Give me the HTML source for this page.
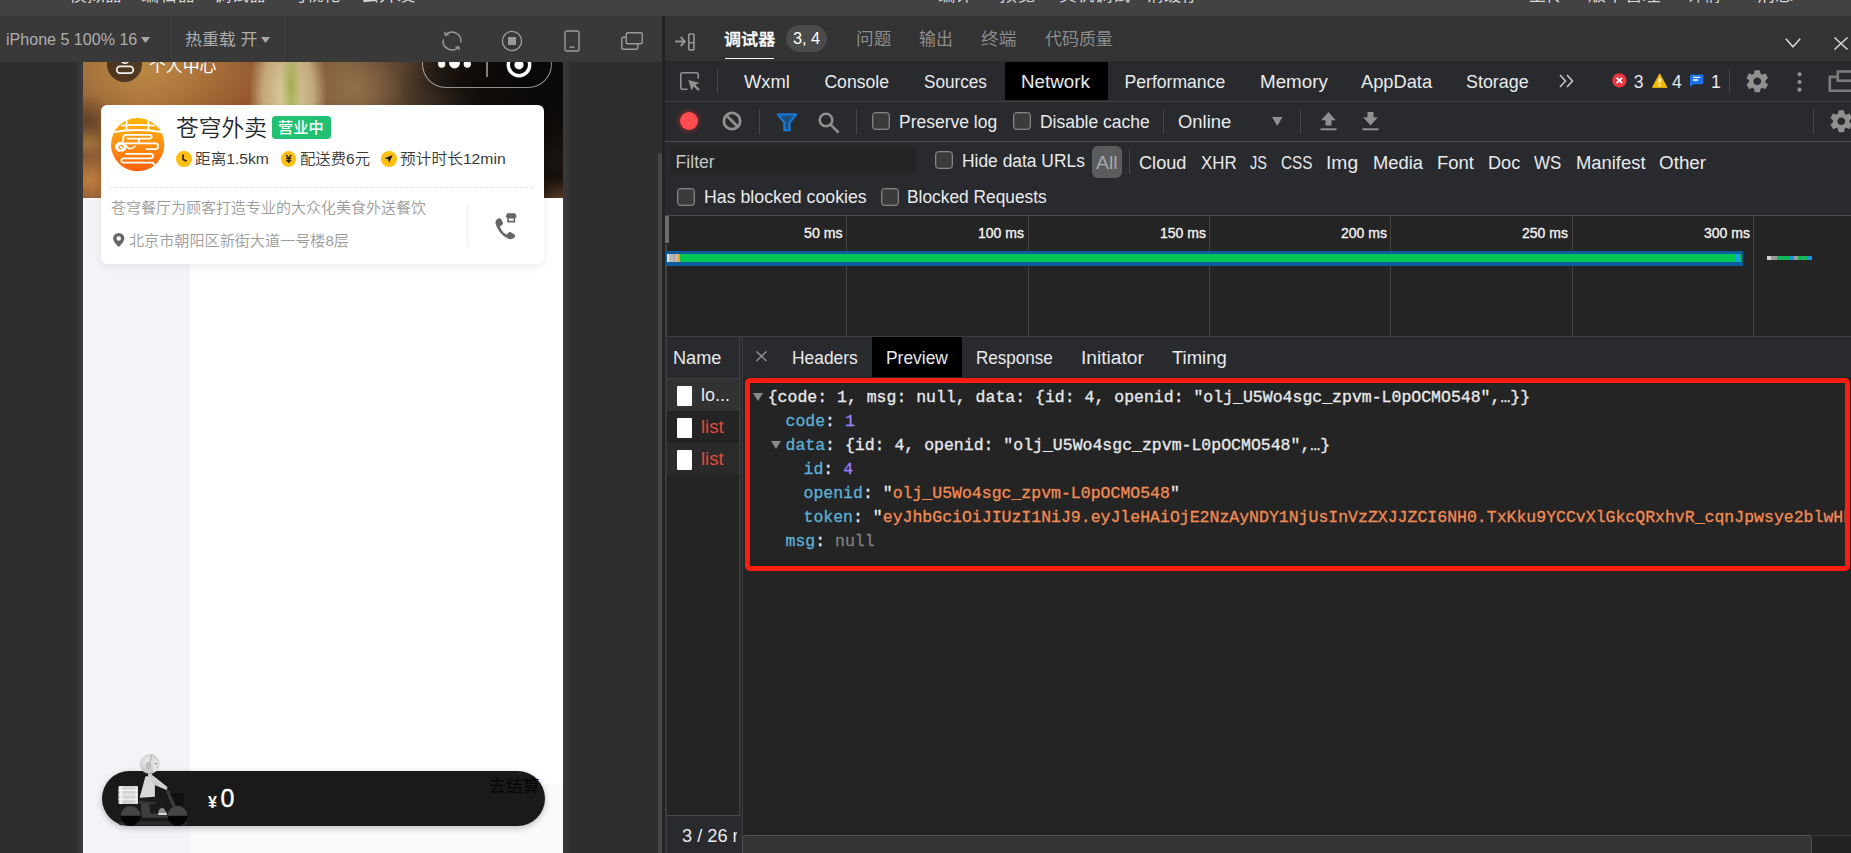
<!DOCTYPE html>
<html lang="zh-CN"><head><meta charset="utf-8"><title>微信开发者工具 - 调试器 Network Preview</title>
<style>
html,body{margin:0;padding:0;overflow:hidden}
html{width:1851px;height:853px;background:#2e2e2e}
#root{position:absolute;left:0;top:0;width:1851px;height:853px;overflow:hidden}
body{width:1851px;height:853px;overflow:hidden;position:relative;background:#2e2e2e;font-family:"Liberation Sans","Noto Sans CJK SC",sans-serif;}
.a{position:absolute}
.t{position:absolute;white-space:pre;transform-origin:0 50%;font-family:"Liberation Sans","Noto Sans CJK SC",sans-serif}
.clip{position:absolute;overflow:hidden}
svg{position:absolute;overflow:visible}
.cb{position:absolute;width:16px;height:16px;border:1px solid #858585;border-radius:3.500px;background:#3b3b3b;box-shadow:inset 0 0 0 .5px #6a6a6a}
.vsep{position:absolute;width:1px;background:#4a4a4a}

</style></head>
<body>
<div id="root">
<div class="clip" style="left:0;top:0;width:1851px;height:16px;background:#424242">
<span class="t" style='left:69.3px;top:-14.8px;font-size:16.5px;line-height:21px;color:#d6d6d6;transform:scaleX(1.0768);'>模拟器</span>
<span class="t" style='left:141.3px;top:-14.8px;font-size:16.5px;line-height:21px;color:#d6d6d6;transform:scaleX(1.0970);'>编辑器</span>
<span class="t" style='left:214.3px;top:-14.8px;font-size:16.5px;line-height:21px;color:#d6d6d6;transform:scaleX(1.0566);'>调试器</span>
<span class="t" style='left:290.4px;top:-14.8px;font-size:16.5px;line-height:21px;color:#d6d6d6;transform:scaleX(1.0162);'>可视化</span>
<span class="t" style='left:361.4px;top:-14.8px;font-size:16.5px;line-height:21px;color:#d6d6d6;transform:scaleX(1.0970);'>云开发</span>
<span class="t" style='left:938.4px;top:-14.8px;font-size:16.5px;line-height:21px;color:#d6d6d6;transform:scaleX(1.0545);'>编译</span>
<span class="t" style='left:999.4px;top:-14.8px;font-size:16.5px;line-height:21px;color:#d6d6d6;transform:scaleX(1.1000);'>预览</span>
<span class="t" style='left:1059.3px;top:-14.8px;font-size:16.5px;line-height:21px;color:#d6d6d6;transform:scaleX(1.0803);'>真机调试</span>
<span class="t" style='left:1146.8px;top:-14.8px;font-size:16.5px;line-height:21px;color:#d6d6d6;transform:scaleX(1.0364);'>清缓存</span>
<span class="t" style='left:1529.3px;top:-14.8px;font-size:16.5px;line-height:21px;color:#d6d6d6;transform:scaleX(1.0242);'>上传</span>
<span class="t" style='left:1588.3px;top:-14.8px;font-size:16.5px;line-height:21px;color:#d6d6d6;transform:scaleX(1.0955);'>版本管理</span>
<span class="t" style='left:1686.8px;top:-14.8px;font-size:16.5px;line-height:21px;color:#d6d6d6;transform:scaleX(1.0242);'>详情</span>
<span class="t" style='left:1756.8px;top:-14.8px;font-size:16.5px;line-height:21px;color:#d6d6d6;transform:scaleX(1.1000);'>消息</span>
</div>
<div class="a" style="left:0;top:16px;width:662px;height:46px;background:#393939"></div>
<div class="a" style="left:168px;top:16px;width:1px;height:46px;background:#343434"></div>
<div class="a" style="left:287px;top:16px;width:1px;height:46px;background:#343434"></div>
<span class="t" style='left:5.8px;top:28.7px;font-size:16.2px;line-height:21px;color:#adadad;transform:scaleX(0.9923);'>iPhone 5 100% 16</span>
<svg style="left:141px;top:37px" width="9" height="6"><path d="M0 0h9L4.5 6z" fill="#a8a8a8"/></svg>
<span class="t" style='left:185.3px;top:28.7px;font-size:16.2px;line-height:21px;color:#adadad;transform:scaleX(1.0440);'>热重载 开</span>
<svg style="left:261px;top:37px" width="9" height="6"><path d="M0 0h9L4.5 6z" fill="#a8a8a8"/></svg>
<svg style="left:440px;top:29px;transform:scaleX(-1)" width="24" height="24" viewBox="0 0 24 24" fill="none" stroke="#9a9a9a" stroke-width="1.4">
<path d="M3.2 13.5A9 9 0 0 1 18.5 5.8"/><path d="M20.8 10.5A9 9 0 0 1 5.5 18.2"/>
<path d="M19.3 2.8l-.6 3.4-3.3-.6" /><path d="M4.7 21.2l.6-3.4 3.3.6"/></svg>
<svg style="left:500px;top:29px" width="24" height="24" viewBox="0 0 24 24"><circle cx="12" cy="12" r="9.6" fill="none" stroke="#9a9a9a" stroke-width="1.4"/><rect x="8" y="8" width="8" height="8" fill="#9a9a9a"/></svg>
<svg style="left:564px;top:30px" width="16" height="22" viewBox="0 0 16 22"><rect x="1" y="1" width="14" height="20" rx="2" fill="none" stroke="#9a9a9a" stroke-width="1.4"/><path d="M5.5 17.2h5" stroke="#9a9a9a" stroke-width="1.4"/></svg>
<svg style="left:621px;top:32px" width="22" height="18" viewBox="0 0 22 18" fill="none" stroke="#9a9a9a" stroke-width="1.4"><rect x="5.2" y="0.8" width="16" height="11" rx="1.5"/><path d="M5.2 5.2H2.3a1.5 1.5 0 0 0-1.5 1.5v9a1.5 1.5 0 0 0 1.5 1.5h13a1.5 1.5 0 0 0 1.5-1.5v-3.9"/></svg>
<div class="a" style="left:0;top:62px;width:658px;height:791px;background:#2e2e2e"></div>
<div class="a" style="left:563px;top:62px;width:10px;height:791px;background:linear-gradient(90deg,#3a3a3a,#2e2e2e)"></div>
<div class="a" style="left:74px;top:62px;width:9px;height:791px;background:linear-gradient(270deg,#3c3c3c,#2e2e2e)"></div>
<div class="a" style="left:658.200px;top:153px;width:3.600px;height:700px;background:#464646;border-radius:2px 2px 0 0"></div>
<div class="a" style="left:662px;top:16px;width:3px;height:837px;background:#222"></div>
<div class="clip" style="left:83px;top:62px;width:480px;height:791px;background:#fff"><div class="a" style="left:-83px;top:-62px;width:1851px;height:853px">
<div class="a" style="left:83px;top:40px;width:480px;height:158px;background:
radial-gradient(ellipse 14px 60px at 208px 48px, rgba(150,165,60,.85), rgba(150,165,60,0) 75%),
radial-gradient(ellipse 46px 95px at 205px 55px, rgba(226,216,170,.96), rgba(216,200,150,.7) 55%, rgba(215,200,150,0) 85%),
radial-gradient(ellipse 158px 115px at 474px 48px, rgba(10,9,8,1), rgba(14,11,9,.9) 50%, rgba(20,14,10,0) 100%),
radial-gradient(ellipse 50px 13px at 352px 60px, rgba(84,64,46,.85), rgba(84,64,46,0) 100%),
radial-gradient(ellipse 26px 30px at 478px 105px, rgba(78,68,60,.95), rgba(78,68,60,0) 100%),
radial-gradient(ellipse 30px 22px at 480px 158px, rgba(100,66,36,.95), rgba(100,66,36,0) 100%),
radial-gradient(ellipse 60px 50px at 470px 125px, rgba(24,18,14,1), rgba(24,18,14,0) 100%),
radial-gradient(ellipse 26px 26px at 4px 80px, rgba(98,64,38,.95), rgba(98,64,38,0) 100%),
radial-gradient(ellipse 14px 14px at 5px 100px, rgba(175,135,60,.8), rgba(175,135,60,0) 100%),
radial-gradient(ellipse 30px 22px at 6px 140px, rgba(196,128,62,.95), rgba(196,128,62,0) 100%),
radial-gradient(ellipse 120px 60px at 60px 30px, rgba(188,138,68,.9), rgba(188,138,68,0) 100%),
radial-gradient(ellipse 70px 50px at 150px 70px, rgba(150,86,44,.8), rgba(150,86,44,0) 100%),
radial-gradient(ellipse 48px 38px at 272px 48px, rgba(150,115,78,.8), rgba(150,115,78,0) 100%),
linear-gradient(90deg,#8c5c36 0%,#a56a38 12%,#995c33 30%,#8b5636 42%,#80603e 55%,#5c4430 66%,#33261c 78%,#201812 100%)"></div>
<div class="a" style="left:83px;top:198px;width:107px;height:655px;background:#f3f4f8"></div>
<div class="a" style="left:190px;top:198px;width:373px;height:655px;background:#fff"></div>
<div class="a" style="left:190px;top:784px;width:373px;height:69px;background:#fafafa"></div>
<div class="a" style="left:107px;top:46.5px;width:35px;height:35px;border-radius:50%;background:rgba(40,28,20,.72)"></div>
<svg style="left:113.5px;top:52.5px" width="22" height="22" viewBox="0 0 22 22" fill="none" stroke="#f2f2f2" stroke-width="1.750"><circle cx="11" cy="6.4" r="3.8"/><rect x="2.7" y="13.4" width="16.6" height="6.8" rx="3.4"/></svg>
<span class="t" style='left:149.0px;top:55.7px;font-size:16.5px;line-height:21px;color:#ffffff;transform:scaleX(1.0197);'>个人中心</span>
<div class="a" style="left:421.700px;top:39.500px;width:128px;height:46.500px;border-radius:24px;border:1px solid rgba(255,255,255,.55);background:rgba(0,0,0,.18)"></div>
<div class="a" style="left:486.200px;top:50px;width:1.800px;height:27px;background:rgba(255,255,255,.48)"></div>
<svg style="left:436px;top:55px" width="38" height="16" viewBox="0 0 38 16" fill="#fff"><circle cx="5.700" cy="9" r="3.650"/><circle cx="18.500" cy="8" r="5.450"/><circle cx="31.300" cy="9" r="3.650"/></svg>
<svg style="left:505.300px;top:50.600px" width="28" height="28" viewBox="0 0 28 28"><circle cx="14" cy="14" r="10.700" fill="none" stroke="#fff" stroke-width="3.400"/><circle cx="14" cy="13.800" r="4.600" fill="#fff"/></svg>
<div class="a" style="left:101px;top:105px;width:443px;height:158.5px;border-radius:6px;background:#fff;box-shadow:0 3px 8px rgba(0,0,0,.07)"></div>
<svg style="left:110.600px;top:118.100px" width="53.300" height="53.300" viewBox="0 0 53.300 53.300">
<defs><linearGradient id="lg" x1="0" y1="0" x2="0" y2="1"><stop offset="0" stop-color="#ffb405"/><stop offset=".45" stop-color="#ff9412"/><stop offset="1" stop-color="#ff600a"/></linearGradient>
<clipPath id="lc"><circle cx="26.650" cy="26.650" r="26.650"/></clipPath></defs>
<circle cx="26.650" cy="26.650" r="26.650" fill="url(#lg)"/>
<g clip-path="url(#lc)" fill="none" stroke="#fff" stroke-width="1.750" stroke-linecap="round" stroke-linejoin="round">
<path d="M10.700 7.600Q26.650 6.400 43.100 7.600"/>
<path d="M1.500 14.200Q26.650 9.600 52 14.200" stroke-width="2"/>
<path d="M15.600 1v11M37.400 1v11"/>
<path d="M16.400 20.600H38.200Q40.700 20.600 40.700 18.700T38.200 16.800H15.500Q12.300 16.800 12.300 20V22.500Q12.300 24.300 10.500 24.600"/>
<path d="M27.800 21.500V25.200"/>
<path d="M13.600 25.500H44.400Q47.200 25.500 47.200 28.350T44.400 31.200H35.500"/>
<path d="M14.900 27.400Q16.500 31 19.500 30.600T24 28.200" stroke-width="1.500"/>
<path d="M14.900 35.800H39.700Q42 35.800 42 38.100T39.700 40.400H12.600Q10.300 40.400 10.300 42.500T12.600 44.600H40.500Q43.200 44.600 43.600 48"/>
</g>
<g clip-path="url(#lc)"><path d="M9.800 24.300q2.900-.6 3.700 1.700q2.300.7 1.600 3q.9 2.700-1.800 3.400q-1.400 2.100-3.800 1.100q-2.700.9-3.600-1.600q-2.500-.7-1.800-3.200q-.9-2.500 1.800-3.300q1.200-1.900 3.900-1.100z" fill="#fff"/>
<path d="M12.300 29.400q-.4-2.300-2.600-1.900t-1.500 2.500q.8 1.500 2.300.6" fill="none" stroke="#ff8a10" stroke-width="1.150" stroke-linecap="round"/></g>
</svg>
<span class="t" style='left:175.8px;top:114.4px;font-size:22.5px;line-height:29px;color:#252830;font-weight:350;transform:scaleX(1.0098);'>苍穹外卖</span>
<div class="a" style="left:272px;top:116px;width:59px;height:23px;border-radius:3.5px;background:#22c171"></div>
<span class="t" style='left:278.2px;top:117.8px;font-size:15px;line-height:20px;color:#ffffff;font-weight:500;transform:scaleX(1.0130);'>营业中</span>
<div class="a" style="left:176.4px;top:151.4px;width:15.4px;height:15.4px;border-radius:50%;background:#ffc012"></div>
<svg style="left:176.4px;top:151.4px" width="15.4" height="15.4" viewBox="0 0 15.4 15.4" fill="none" stroke="#3a3020" stroke-width="1.9" stroke-linecap="round" stroke-linejoin="round"><path d="M7.100 4.300v4.200l2.900 1.300"/></svg>
<span class="t" style='left:195.0px;top:149.4px;font-size:15px;line-height:20px;color:#3a3a3a;font-weight:350;transform:scaleX(1.0429);'>距离1.5km</span>
<div class="a" style="left:281px;top:151.4px;width:15.4px;height:15.4px;border-radius:50%;background:#ffc012"></div>
<svg style="left:281px;top:151.4px" width="15.4" height="15.4" viewBox="0 0 15.4 15.4" fill="none" stroke="#2e2410" stroke-width="1.500"><path d="M5.200 3.900l2.500 3.300L10.200 3.900M7.700 7.200v4.700M5.100 7.600h5.200M5.100 9.700h5.200"/></svg>
<span class="t" style='left:299.7px;top:149.4px;font-size:15px;line-height:20px;color:#3a3a3a;font-weight:350;transform:scaleX(1.0242);'>配送费6元</span>
<div class="a" style="left:381.3px;top:151.4px;width:15.4px;height:15.4px;border-radius:50%;background:#ffc012"></div>
<svg style="left:381.3px;top:151.4px" width="15.4" height="15.4" viewBox="0 0 15.4 15.4"><path d="M11.700 3.900L3.400 7.200l3.700 1.100l1 3.700z" fill="#1e1a10"/></svg>
<span class="t" style='left:400.2px;top:149.4px;font-size:15px;line-height:20px;color:#3a3a3a;font-weight:350;transform:scaleX(1.0480);'>预计时长12min</span>
<div class="a" style="left:110px;top:186.5px;width:423px;height:0;border-top:1px dashed #e4e4e4"></div>
<span class="t" style='left:111.1px;top:197.7px;font-size:15px;line-height:20px;color:#9c9c9c;font-weight:350;'>苍穹餐厅为顾客打造专业的大众化美食外送餐饮</span>
<svg style="left:112.500px;top:232.800px" width="11.5" height="14" viewBox="0 0 11.5 14"><path d="M5.750 0a5.600 5.600 0 0 0-5.600 5.500c0 3.600 5.600 8.500 5.600 8.500s5.600-4.900 5.600-8.500A5.600 5.600 0 0 0 5.750 0zm0 7.700a2.200 2.200 0 1 1 0-4.400a2.200 2.200 0 0 1 0 4.400z" fill="#666"/></svg>
<span class="t" style='left:129.2px;top:230.8px;font-size:15px;line-height:20px;color:#9c9c9c;font-weight:350;transform:scaleX(1.0071);'>北京市朝阳区新街大道一号楼8层</span>
<div class="a" style="left:467px;top:204px;width:1px;height:41px;background:#ededed"></div>
<svg style="left:493.500px;top:213px" width="23" height="27" viewBox="0 0 23 27" fill="#666">
<path d="M4.300 5.600c-1.900 .9-3.300 2.500-2.600 5.200c1.500 6.200 6.400 12.100 12.300 14.700c2.700 1.200 5.300.7 6.800-1.500c.7-1.100.4-2.100-.5-2.700l-3.200-1.900c-1-.6-2-.4-2.700.4l-1 1.200c-.4.500-1 .6-1.600.3c-2.600-1.500-4.700-4.300-5.600-7.100c-.2-.6 0-1.100.6-1.500l1.200-.8c.9-.6 1.200-1.600.8-2.600L7.200 6.300C6.700 5.300 5.600 5 4.300 5.600z"/>
<path d="M11.800 3.200L13.200.3h8l1.400 2.900c0 .9-.6 1.500-1.400 1.600v4.600h-8V4.800c-.8-.1-1.400-.7-1.400-1.600zM14.800 5.600v2.200h4.800V5.600z"/></svg>
<div class="a" style="left:102px;top:770.700px;width:442.500px;height:55.300px;border-radius:28px;background:#1a1a1a;box-shadow:0 2px 6px rgba(0,0,0,.25)"></div>
<span class="t" style='left:489.2px;top:775.9px;font-size:16.5px;line-height:21px;color:#050505;transform:scaleX(1.0202);'>去结算</span>
<span class="t" style='left:208.0px;top:791.9px;font-size:16px;line-height:21px;color:#ffffff;font-weight:700;'>¥</span>
<span class="t" style='left:220.5px;top:781.9px;font-size:25px;line-height:32px;color:#ffffff;-webkit-text-stroke:.35px #fff;'>0</span>
<svg style="left:100px;top:745px" width="100" height="90" viewBox="0 0 100 90">
<defs><radialGradient id="hd" cx=".4" cy=".35" r=".7"><stop offset="0" stop-color="#ededed"/><stop offset="1" stop-color="#bdbdbd"/></radialGradient></defs>
<rect x="19" y="76.500" width="68.500" height="3.800" rx="1.900" fill="#2b2b2b"/>
<rect x="70.700" y="48.500" width="12.600" height="11.600" fill="#0c0c0c"/>
<path d="M70.700 51.400h12.600M70.700 54.300h12.600M70.700 57.200h12.600M73.800 48.500v11.600M77 48.500v11.600M80.200 48.500v11.600" stroke="#1d1d1d" stroke-width=".6"/>
<path d="M65.300 44.300l2.700-.6 8.800 19.600-3.400 1.200z" fill="#3b3b3b"/>
<path d="M41.500 59h8l.5 9.600h19v4.200H42.500q-2.500-6-1-13.800z" fill="#3e3e3e"/>
<rect x="38.500" y="55.400" width="17.400" height="3.800" rx="1" fill="#353535"/>
<circle cx="30.600" cy="70.700" r="10" fill="#050505"/><path d="M20.600 70.700a10 10 0 0 1 20 0z" fill="#454545"/>
<circle cx="77.500" cy="70.700" r="10" fill="#050505"/><path d="M67.500 70.700a10 10 0 0 1 20 0z" fill="#454545"/>
<rect x="18.500" y="41.100" width="19.500" height="18" rx=".8" fill="#d4d4d4"/>
<path d="M18.500 45.400h19.500M18.500 49.800h19.500M18.500 54.300h19.500" stroke="#f4f4f4" stroke-width="1.100"/>
<path d="M20.300 41.100v18M21.900 41.100v18M36.200 41.100v18" stroke="#fafafa" stroke-width="1"/>
<path d="M40.100 52.700l18.600-2.300 4.900 12.700-4.300 2.400-3.600-8.300-15.800-1.200z" fill="#1c1c1c"/>
<path d="M58.500 66.200l1.500-2.600 3.500-.6 3 4.600-.3 2h-7.700z" fill="#8d8d8d"/><path d="M58.300 68.200h8.300v1.600h-8.300z" fill="#f0f0f0"/>
<path d="M45.400 31.600l7.300-1 14.800 11.600-1.200 2.500-11.400-4.600v11.600l-15.300 1z" fill="#d7d7d7"/>
<path d="M52.700 30.600l14.800 11.600-1.200 2.500-11.400-4.600-4.500-6z" fill="#c4c4c4"/>
<path d="M50.800 33.200l13.700 10.300M52.600 32l13.600 10.600" stroke="#efefef" stroke-width=".7"/>
<path d="M48 28.500h4.200v4H48z" fill="#c9c9c9"/>
<circle cx="49.600" cy="19" r="10" fill="url(#hd)"/>
<path d="M52 9.500q-2.600 5.500-2.400 12" fill="none" stroke="#a9a9a9" stroke-width="1"/>
<ellipse cx="48.400" cy="20.600" rx="2.200" ry="3.200" fill="#c2c2c2" stroke="#a5a5a5" stroke-width=".6"/>
<path d="M53 13.500q5 .5 6.300 6.500l-.8 4.600q-2.800 2.600-5.800 1.600z" fill="#e2e2e2"/>
<path d="M54.800 18.400l2.600.5M57 21.800l.9.200" stroke="#707070" stroke-width=".8"/>
</svg>
</div></div>
<div class="a" style="left:665px;top:16px;width:1186px;height:45px;background:#333333"></div>
<svg style="left:675px;top:33px" width="20" height="18" viewBox="0 0 20 18" fill="none" stroke="#939393" stroke-width="1.900"><path d="M0 8.500h9.500M5.600 4l4.200 4.500-4.200 4.500"/><rect x="13.800" y="1" width="5.200" height="15.800" rx=".8" stroke-width="1.700"/><path d="M13.800 9.700h5.200" stroke-width="1.500"/></svg>
<span class="t" style='left:724.1px;top:29.0px;font-size:16.4px;line-height:21px;color:#ffffff;font-weight:500;transform:scaleX(1.0412);-webkit-text-stroke:.3px #fff;'>调试器</span>
<div class="a" style="left:725px;top:57.600px;width:48.800px;height:1.800px;background:#f0f0f0"></div>
<div class="a" style="left:786px;top:25px;width:41px;height:27px;border-radius:14px;background:#4b4b4b"></div>
<span class="t" style='left:793.1px;top:28.1px;font-size:16.2px;line-height:21px;color:#ffffff;transform:scaleX(1.0068);'>3, 4</span>
<span class="t" style='left:856.4px;top:28.7px;font-size:16.5px;line-height:21px;color:#8c8c8c;transform:scaleX(1.0697);'>问题</span>
<span class="t" style='left:919.4px;top:28.7px;font-size:16.5px;line-height:21px;color:#8c8c8c;transform:scaleX(1.0242);'>输出</span>
<span class="t" style='left:981.4px;top:28.7px;font-size:16.5px;line-height:21px;color:#8c8c8c;transform:scaleX(1.0697);'>终端</span>
<span class="t" style='left:1044.8px;top:28.7px;font-size:16.5px;line-height:21px;color:#8c8c8c;transform:scaleX(1.0273);'>代码质量</span>
<svg style="left:1785px;top:38px" width="24" height="10" viewBox="0 0 24 10" fill="none" stroke="#d0d0d0" stroke-width="1.700"><path d="M0.800 0.800l7.200 8 7.200-8"/></svg>
<svg style="left:1833.500px;top:36.500px" width="14" height="13" viewBox="0 0 14 13" fill="none" stroke="#d0d0d0" stroke-width="1.700"><path d="M0.500 0.500l13 12M13.500 0.500l-13 12"/></svg>
<div class="a" style="left:665px;top:61px;width:1186px;height:792px;background:#292a2d"></div>
<div class="a" style="left:665px;top:100.500px;width:1186px;height:1px;background:#3f4042"></div>
<svg style="left:679.500px;top:72px" width="21" height="20" viewBox="0 0 21 20"><path d="M7.500 17.200H2.300a1.500 1.500 0 0 1-1.500-1.500V2.300A1.500 1.500 0 0 1 2.300.8h14.400a1.500 1.500 0 0 1 1.500 1.500v4.500" fill="none" stroke="#909090" stroke-width="1.600"/><path d="M8.300 8l3.200 10.500 2.300-3.900 4.300 4.400 1.700-1.700-4.400-4.300 3.900-2.300z" fill="#909090"/></svg>
<div class="vsep" style="left:716.500px;top:69px;height:24px;background:#45474a"></div>
<div class="a" style="left:1004.500px;top:61.500px;width:103.500px;height:38.500px;background:#000"></div>
<span class="t" style='left:743.6px;top:71.1px;font-size:17.6px;line-height:23px;color:#e8eaed;transform:scaleX(1.0416);'>Wxml</span>
<span class="t" style='left:824.4px;top:71.1px;font-size:17.6px;line-height:23px;color:#e8eaed;'>Console</span>
<span class="t" style='left:923.6px;top:71.1px;font-size:17.6px;line-height:23px;color:#e8eaed;transform:scaleX(0.9745);'>Sources</span>
<span class="t" style='left:1021.4px;top:71.1px;font-size:17.6px;line-height:23px;color:#e8eaed;transform:scaleX(1.0662);'>Network</span>
<span class="t" style='left:1124.5px;top:71.1px;font-size:17.6px;line-height:23px;color:#e8eaed;'>Performance</span>
<span class="t" style='left:1259.8px;top:71.1px;font-size:17.6px;line-height:23px;color:#e8eaed;transform:scaleX(1.0685);'>Memory</span>
<span class="t" style='left:1361.3px;top:71.1px;font-size:17.6px;line-height:23px;color:#e8eaed;transform:scaleX(1.0384);'>AppData</span>
<span class="t" style='left:1466.2px;top:71.1px;font-size:17.6px;line-height:23px;color:#e8eaed;transform:scaleX(1.0158);'>Storage</span>
<svg style="left:1558.500px;top:74px" width="15" height="14" viewBox="0 0 15 14" fill="none" stroke="#c8cacd" stroke-width="1.500"><path d="M1 1l5.500 6L1 13M8 1l5.500 6L8 13"/></svg>
<svg style="left:1612.100px;top:73.100px" width="14.800" height="14.800" viewBox="0 0 16 16"><circle cx="8" cy="8" r="7.700" fill="#ea3640"/><path d="M5 5l6 6M11 5l-6 6" stroke="#fff" stroke-width="1.900"/></svg>
<span class="t" style='left:1633.8px;top:71.1px;font-size:17.6px;line-height:23px;color:#e8eaed;'>3</span>
<svg style="left:1651.800px;top:72.800px" width="15.400" height="15.200" viewBox="0 0 16 15.500"><path d="M8 0.600L15.600 14.800H.4z" fill="#f5bd00" stroke="#f5bd00" stroke-width=".8" stroke-linejoin="round"/><path d="M8 5v5.200" stroke="#fff" stroke-width="2"/><circle cx="8" cy="12.500" r="1.150" fill="#fff"/></svg>
<span class="t" style='left:1672.0px;top:71.1px;font-size:17.6px;line-height:23px;color:#e8eaed;'>4</span>
<svg style="left:1690.100px;top:73.600px" width="13.300" height="13.300" viewBox="0 0 15 14"><path d="M1.500 0h12A1.500 1.500 0 0 1 15 1.500v8a1.500 1.500 0 0 1-1.500 1.500H4L0 14V1.500A1.500 1.500 0 0 1 1.500 0z" fill="#1a73e8"/><path d="M3.500 3.300h8M3.500 6.300h5.500" stroke="#fff" stroke-width="1.500"/></svg>
<span class="t" style='left:1711.0px;top:71.1px;font-size:17.6px;line-height:23px;color:#e8eaed;'>1</span>
<div class="vsep" style="left:1729px;top:69px;height:24px;background:#45474a"></div>
<svg style="left:1743.500px;top:67.800px" width="26.500" height="26.500" viewBox="0 0 24 24"><path d="M19.430 12.980c.040-.320.070-.640.070-.980s-.030-.660-.070-.980l2.110-1.650c.190-.150.240-.420.120-.640l-2-3.460c-.120-.220-.390-.300-.610-.220l-2.490 1c-.520-.400-1.080-.730-1.690-.980l-.380-2.650C14.460 2.180 14.250 2 14 2h-4c-.250 0-.460.180-.490.420l-.380 2.650c-.610.250-1.170.590-1.690.980l-2.490-1c-.230-.090-.490 0-.610.220l-2 3.460c-.130.220-.070.490.120.640l2.110 1.650c-.040.320-.070.650-.070.980s.030.660.070.980l-2.110 1.650c-.190.150-.240.420-.120.640l2 3.460c.120.220.390.300.610.220l2.490-1c.520.400 1.080.730 1.690.980l.380 2.650c.030.240.240.420.490.420h4c.250 0 .460-.180.490-.420l.380-2.650c.610-.250 1.170-.590 1.690-.980l2.490 1c.230.090.490 0 .610-.220l2-3.460c.120-.220.070-.490-.120-.640l-2.110-1.650zM12 15.500c-1.930 0-3.500-1.570-3.500-3.500s1.570-3.500 3.500-3.500 3.500 1.570 3.500 3.500-1.570 3.500-3.500 3.500z" fill="#909090"/></svg>
<svg style="left:1797px;top:71.500px" width="5" height="20" viewBox="0 0 5 20" fill="#909090"><circle cx="2.500" cy="2.300" r="2.100"/><circle cx="2.500" cy="10" r="2.100"/><circle cx="2.500" cy="17.700" r="2.100"/></svg>
<svg style="left:1828px;top:69px" width="26" height="24" viewBox="0 0 26 24" fill="none" stroke="#7b7b7b" stroke-width="2.600"><rect x="9.800" y="2.500" width="22" height="9.200"/><path d="M9.800 7.900H1.800v13.800h24"/></svg>
<div class="a" style="left:665px;top:141px;width:1186px;height:1px;background:#494c50"></div>
<div class="a" style="left:680px;top:111.800px;width:18.400px;height:18.400px;border-radius:50%;background:#ff4c4e;box-shadow:0 0 4px 1.500px rgba(190,40,44,.55)"></div>
<svg style="left:722px;top:111px" width="20" height="20" viewBox="0 0 20 20" fill="none" stroke="#909090" stroke-width="2.800"><circle cx="10" cy="10" r="8.200"/><path d="M4.200 4.200l11.600 11.600"/></svg>
<div class="vsep" style="left:758.500px;top:109px;height:25px;background:#45474a"></div>
<svg style="left:776px;top:112.500px" width="22" height="19" viewBox="0 0 22 19"><path d="M1.800 1.400h18.400l-6.600 8.200v7.600h-5.200V9.600z" fill="#1d4f80" stroke="#1878d0" stroke-width="2.300" stroke-linejoin="round"/></svg>
<svg style="left:818px;top:111.500px" width="22" height="22" viewBox="0 0 22 22" fill="none" stroke="#909090" stroke-width="2.500"><circle cx="8" cy="8" r="6.300"/><path d="M12.600 12.600l8 8"/></svg>
<div class="vsep" style="left:856px;top:109px;height:25px;background:#45474a"></div>
<div class="cb" style="left:872.300px;top:112.300px"></div>
<span class="t" style='left:898.6px;top:110.5px;font-size:17.6px;line-height:23px;color:#e8eaed;transform:scaleX(0.9941);'>Preserve log</span>
<div class="cb" style="left:1013.300px;top:112.300px"></div>
<span class="t" style='left:1039.5px;top:110.5px;font-size:17.6px;line-height:23px;color:#e8eaed;transform:scaleX(0.9917);'>Disable cache</span>
<div class="vsep" style="left:1163px;top:109px;height:25px;background:#45474a"></div>
<span class="t" style='left:1177.9px;top:110.5px;font-size:17.6px;line-height:23px;color:#e8eaed;transform:scaleX(1.0460);'>Online</span>
<svg style="left:1271.500px;top:116.500px" width="10.500" height="9" viewBox="0 0 10.500 9"><path d="M0 0h10.500L5.250 9z" fill="#909090"/></svg>
<div class="vsep" style="left:1300px;top:109px;height:25px;background:#45474a"></div>
<svg style="left:1319.500px;top:112px" width="17" height="19" viewBox="0 0 17 19" fill="#909090"><path d="M8.500 0L1.200 8.200h4.300v5.300h6V8.200h4.300z"/><rect x="0.500" y="16.300" width="16" height="2"/></svg>
<svg style="left:1361.500px;top:112px" width="17" height="19" viewBox="0 0 17 19" fill="#909090"><path d="M8.500 13.500L1.200 5.300h4.300V0h6v5.300h4.300z"/><rect x="0.500" y="16.300" width="16" height="2"/></svg>
<div class="vsep" style="left:1813px;top:109px;height:25px;background:#45474a"></div>
<svg style="left:1827.500px;top:108px" width="26.500" height="26.500" viewBox="0 0 24 24"><path d="M19.430 12.980c.040-.320.070-.640.070-.980s-.030-.660-.070-.980l2.110-1.650c.190-.150.240-.420.120-.640l-2-3.460c-.120-.220-.390-.300-.610-.220l-2.490 1c-.520-.400-1.080-.730-1.690-.980l-.380-2.650C14.460 2.180 14.250 2 14 2h-4c-.250 0-.460.180-.490.420l-.380 2.650c-.610.250-1.170.590-1.690.980l-2.490-1c-.230-.090-.490 0-.610.220l-2 3.460c-.130.220-.070.490.120.640l2.110 1.650c-.040.320-.070.650-.070.980s.030.660.070.980l-2.110 1.650c-.190.150-.240.420-.120.640l2 3.460c.120.220.390.300.610.220l2.490-1c.520.400 1.080.730 1.690.980l.380 2.650c.030.240.240.420.490.420h4c.250 0 .460-.180.490-.420l.380-2.650c.610-.250 1.170-.590 1.690-.980l2.490 1c.230.090.490 0 .610-.220l2-3.460c.120-.220.070-.490-.120-.640l-2.110-1.650zM12 15.500c-1.930 0-3.500-1.570-3.500-3.500s1.570-3.500 3.500-3.500 3.500 1.570 3.500 3.500-1.570 3.500-3.500 3.500z" fill="#909090"/></svg>
<div class="a" style="left:671px;top:147px;width:245px;height:26px;background:#242424"></div>
<span class="t" style='left:675.6px;top:150.7px;font-size:17.6px;line-height:23px;color:#c4c6c9;'>Filter</span>
<div class="cb" style="left:934.900px;top:151.300px"></div>
<span class="t" style='left:961.5px;top:149.7px;font-size:17.6px;line-height:23px;color:#e8eaed;transform:scaleX(0.9895);'>Hide data URLs</span>
<div class="a" style="left:1092px;top:145.500px;width:30px;height:32.500px;border-radius:6px;background:#5b5c5e"></div>
<span class="t" style='left:1096.1px;top:152.2px;font-size:17.6px;line-height:23px;color:#a6a8ab;transform:scaleX(1.1093);'>All</span>
<div class="vsep" style="left:1129px;top:149px;height:25px;background:#45474a"></div>
<span class="t" style='left:1139.0px;top:152.2px;font-size:17.6px;line-height:23px;color:#e8eaed;transform:scaleX(1.0308);'>Cloud</span>
<span class="t" style='left:1200.6px;top:152.2px;font-size:17.6px;line-height:23px;color:#e8eaed;transform:scaleX(0.9608);'>XHR</span>
<span class="t" style='left:1249.9px;top:152.2px;font-size:17.6px;line-height:23px;color:#e8eaed;transform:scaleX(0.8225);'>JS</span>
<span class="t" style='left:1280.8px;top:152.2px;font-size:17.6px;line-height:23px;color:#e8eaed;transform:scaleX(0.8705);'>CSS</span>
<span class="t" style='left:1326.3px;top:152.2px;font-size:17.6px;line-height:23px;color:#e8eaed;transform:scaleX(1.0939);'>Img</span>
<span class="t" style='left:1372.8px;top:152.2px;font-size:17.6px;line-height:23px;color:#e8eaed;transform:scaleX(1.0413);'>Media</span>
<span class="t" style='left:1437.0px;top:152.2px;font-size:17.6px;line-height:23px;color:#e8eaed;transform:scaleX(1.0506);'>Font</span>
<span class="t" style='left:1487.9px;top:152.2px;font-size:17.6px;line-height:23px;color:#e8eaed;transform:scaleX(1.0289);'>Doc</span>
<span class="t" style='left:1534.3px;top:152.2px;font-size:17.6px;line-height:23px;color:#e8eaed;transform:scaleX(0.9632);'>WS</span>
<span class="t" style='left:1575.6px;top:152.2px;font-size:17.6px;line-height:23px;color:#e8eaed;transform:scaleX(1.0451);'>Manifest</span>
<span class="t" style='left:1659.0px;top:152.2px;font-size:17.6px;line-height:23px;color:#e8eaed;transform:scaleX(1.0701);'>Other</span>
<div class="cb" style="left:676.900px;top:187.600px"></div>
<span class="t" style='left:703.8px;top:186.4px;font-size:17.6px;line-height:23px;color:#e8eaed;transform:scaleX(1.0083);'>Has blocked cookies</span>
<div class="cb" style="left:881px;top:187.600px"></div>
<span class="t" style='left:907.4px;top:186.4px;font-size:17.6px;line-height:23px;color:#e8eaed;transform:scaleX(0.9851);'>Blocked Requests</span>
<div class="a" style="left:665px;top:215px;width:1186px;height:121.500px;background:#242424;border-top:1px solid #4a4c50;border-bottom:1px solid #3d3d3d;box-sizing:border-box"></div>
<div class="a" style="left:665px;top:216px;width:4px;height:27px;background:#6d6d6d"></div>
<div class="a" style="left:665px;top:244px;width:2px;height:92px;background:#414141"></div>
<div class="a" style="left:846.0px;top:216px;width:1.200px;height:120px;background:#424242"></div>
<span class="t" style='left:803.9px;top:223.7px;font-size:14.8px;line-height:19px;color:#f4f4f4;transform:scaleX(0.9579);-webkit-text-stroke:.35px #f4f4f4;'>50 ms</span>
<div class="a" style="left:1027.5px;top:216px;width:1.200px;height:120px;background:#424242"></div>
<span class="t" style='left:978.0px;top:223.7px;font-size:14.8px;line-height:19px;color:#f4f4f4;transform:scaleX(0.9458);-webkit-text-stroke:.35px #f4f4f4;'>100 ms</span>
<div class="a" style="left:1208.9px;top:216px;width:1.200px;height:120px;background:#424242"></div>
<span class="t" style='left:1159.5px;top:223.7px;font-size:14.8px;line-height:19px;color:#f4f4f4;transform:scaleX(0.9458);-webkit-text-stroke:.35px #f4f4f4;'>150 ms</span>
<div class="a" style="left:1390.3px;top:216px;width:1.200px;height:120px;background:#424242"></div>
<span class="t" style='left:1340.9px;top:223.7px;font-size:14.8px;line-height:19px;color:#f4f4f4;transform:scaleX(0.9458);-webkit-text-stroke:.35px #f4f4f4;'>200 ms</span>
<div class="a" style="left:1571.8px;top:216px;width:1.200px;height:120px;background:#424242"></div>
<span class="t" style='left:1522.3px;top:223.7px;font-size:14.8px;line-height:19px;color:#f4f4f4;transform:scaleX(0.9458);-webkit-text-stroke:.35px #f4f4f4;'>250 ms</span>
<div class="a" style="left:1753.2px;top:216px;width:1.200px;height:120px;background:#424242"></div>
<span class="t" style='left:1703.8px;top:223.7px;font-size:14.8px;line-height:19px;color:#f4f4f4;transform:scaleX(0.9458);-webkit-text-stroke:.35px #f4f4f4;'>300 ms</span>
<div class="a" style="left:666px;top:251px;width:1077px;height:15.200px;background:#0d5c9e"></div>
<div class="a" style="left:667px;top:254px;width:1073.500px;height:8px;background:#00c853"></div>
<div class="a" style="left:667px;top:254px;width:11px;height:8px;background:linear-gradient(90deg,#e6e6e6 0,#e6e6e6 14%,#b5b5b5 14%,#b5b5b5 68%,#b09a90 68%,#b09a90 76%,#b8b8c8 76%,#b8b8c8 100%)"></div>
<div class="a" style="left:678px;top:254px;width:2px;height:8px;background:#e8a21c"></div>
<div class="a" style="left:1735.400px;top:254px;width:5px;height:8px;background:#10a3f0"></div>
<div class="a" style="left:1767px;top:256px;width:45px;height:4px;background:linear-gradient(90deg,#cfcfcf 0,#cfcfcf 8%,#9a9a9a 8%,#9a9a9a 22%,#14b85a 22%,#14b85a 48%,#1696e0 48%,#1696e0 60%,#9a9a9a 60%,#9a9a9a 70%,#14b85a 70%,#14b85a 88%,#1696e0 88%,#1696e0 100%)"></div>
<div class="a" style="left:665px;top:336.500px;width:1186px;height:41.500px;background:#292a2d"></div>
<div class="a" style="left:871.700px;top:337px;width:90.500px;height:39.500px;background:#000"></div>
<span class="t" style='left:672.6px;top:347.2px;font-size:17.6px;line-height:23px;color:#e8eaed;transform:scaleX(1.0312);'>Name</span>
<svg style="left:755.500px;top:351px" width="11" height="10.500" viewBox="0 0 11 10.500" fill="none" stroke="#8a8d91" stroke-width="1.500"><path d="M0.500 0.500l10 9.500M10.500 0.500l-10 9.500"/></svg>
<span class="t" style='left:791.6px;top:347.2px;font-size:17.6px;line-height:23px;color:#e8eaed;transform:scaleX(0.9892);'>Headers</span>
<span class="t" style='left:886.2px;top:347.2px;font-size:17.6px;line-height:23px;color:#e8eaed;transform:scaleX(0.9892);'>Preview</span>
<span class="t" style='left:976.1px;top:347.2px;font-size:17.6px;line-height:23px;color:#e8eaed;transform:scaleX(0.9693);'>Response</span>
<span class="t" style='left:1080.8px;top:347.2px;font-size:17.6px;line-height:23px;color:#e8eaed;transform:scaleX(1.0901);'>Initiator</span>
<span class="t" style='left:1172.4px;top:347.2px;font-size:17.6px;line-height:23px;color:#e8eaed;transform:scaleX(1.0510);'>Timing</span>
<div class="a" style="left:666px;top:377.500px;width:73.500px;height:1px;background:#3d3f42"></div>
<div class="a" style="left:666px;top:378.500px;width:73.500px;height:436px;background:#242424"></div>
<div class="a" style="left:666px;top:378.500px;width:73.500px;height:32.400px;background:#323232"></div>
<div class="a" style="left:666px;top:443px;width:73.500px;height:32px;background:#2a2a2a"></div>
<div class="a" style="left:677.200px;top:386.3px;width:15.300px;height:19.300px;background:#fff;border-radius:1px"></div>
<span class="t" style='left:700.6px;top:383.6px;font-size:17.6px;line-height:23px;color:#e8eaed;transform:scaleX(1.0226);'>lo...</span>
<div class="a" style="left:677.200px;top:418.3px;width:15.300px;height:19.300px;background:#fff;border-radius:1px"></div>
<span class="t" style='left:700.6px;top:415.6px;font-size:17.6px;line-height:23px;color:#e5493a;transform:scaleX(1.0458);'>list</span>
<div class="a" style="left:677.200px;top:450.3px;width:15.300px;height:19.300px;background:#fff;border-radius:1px"></div>
<span class="t" style='left:700.6px;top:447.6px;font-size:17.6px;line-height:23px;color:#e5493a;transform:scaleX(1.0458);'>list</span>
<div class="a" style="left:739.500px;top:337px;width:2.500px;height:516px;background:#2c2c2e"></div>
<div class="a" style="left:739.300px;top:337px;width:1px;height:516px;background:#3f4144"></div>
<div class="a" style="left:741.500px;top:337px;width:1px;height:516px;background:#3a3b3e"></div>
<div class="a" style="left:665px;top:337px;width:1.500px;height:516px;background:#3a3b3e"></div>
<div class="a" style="left:666.500px;top:814.500px;width:73px;height:38.500px;background:#292a2d;border-top:1px solid #45474a;box-sizing:border-box"></div>
<div class="clip" style="left:666.500px;top:815px;width:70.300px;height:38px"><span class="t" style='left:15.3px;top:9.5px;font-size:17.6px;line-height:23px;color:#e8eaed;transform:scaleX(1.035);'>3 / 26 requests</span></div>
<div class="a" style="left:742.500px;top:377px;width:1108.500px;height:476px;background:#242424"></div>
<div class="a" style="left:1812px;top:835px;width:39px;height:18px;background:#222;border-top:1px solid #393939;box-sizing:border-box"></div>
<div class="a" style="left:742px;top:835px;width:1070px;height:20px;background:#343434;border:1px solid #505050;border-radius:3px 3px 0 0;box-sizing:border-box"></div>
<div class="clip" style="left:745px;top:378px;width:1104px;height:192px">
<svg style="left:8.200000000000045px;top:15.199999999999989px" width="10" height="8" viewBox="0 0 10 8"><path d="M0 0h10L5 8z" fill="#8a8a8a"/></svg>
<span class="t" style='left:22.700000000000045px;top:9.0px;font-family:"Liberation Mono","Noto Sans CJK SC",monospace;font-size:16.5px;line-height:22px;-webkit-text-stroke:.3px'><span style="color:#e8eaed">{code: 1, msg: null, data</span><span style="color:#e8eaed">: {id: 4, openid: &quot;olj_U5Wo4sgc_zpvm-L0pOCMO548&quot;,…}}</span></span>
<span class="t" style='left:40.5px;top:33.0px;font-family:"Liberation Mono","Noto Sans CJK SC",monospace;font-size:16.5px;line-height:22px;-webkit-text-stroke:.3px'><span style="color:#5db0d7">code</span><span style="color:#e8eaed">: </span><span style="color:#9980ff">1</span></span>
<svg style="left:25.799999999999955px;top:63.19999999999999px" width="10" height="8" viewBox="0 0 10 8"><path d="M0 0h10L5 8z" fill="#8a8a8a"/></svg>
<span class="t" style='left:40.5px;top:57.0px;font-family:"Liberation Mono","Noto Sans CJK SC",monospace;font-size:16.5px;line-height:22px;-webkit-text-stroke:.3px'><span style="color:#5db0d7">data</span><span style="color:#e8eaed">: {id: 4, openid: &quot;olj_U5Wo4sgc_zpvm-L0pOCMO548&quot;,…}</span></span>
<span class="t" style='left:58.5px;top:81.0px;font-family:"Liberation Mono","Noto Sans CJK SC",monospace;font-size:16.5px;line-height:22px;-webkit-text-stroke:.3px'><span style="color:#5db0d7">id</span><span style="color:#e8eaed">: </span><span style="color:#9980ff">4</span></span>
<span class="t" style='left:58.5px;top:105.0px;font-family:"Liberation Mono","Noto Sans CJK SC",monospace;font-size:16.5px;line-height:22px;-webkit-text-stroke:.3px'><span style="color:#5db0d7">openid</span><span style="color:#e8eaed">: &quot;</span><span style="color:#f28b54">olj_U5Wo4sgc_zpvm-L0pOCMO548</span><span style="color:#e8eaed">&quot;</span></span>
<span class="t" style='left:58.5px;top:129.0px;font-family:"Liberation Mono","Noto Sans CJK SC",monospace;font-size:16.5px;line-height:22px;-webkit-text-stroke:.3px'><span style="color:#5db0d7">token</span><span style="color:#e8eaed">: &quot;</span><span style="color:#f28b54">eyJhbGciOiJIUzI1NiJ9.eyJleHAiOjE2NzAyNDY1NjUsInVzZXJJZCI6NH0.TxKku9YCCvXlGkcQRxhvR_cqnJpwsye2blwHbcRGdC8w4eU3Yk</span><span style="color:#e8eaed">&quot;</span></span>
<span class="t" style='left:40.5px;top:153.0px;font-family:"Liberation Mono","Noto Sans CJK SC",monospace;font-size:16.5px;line-height:22px;-webkit-text-stroke:.3px'><span style="color:#5db0d7">msg</span><span style="color:#e8eaed">: </span><span style="color:#7f7f7f">null</span></span>
</div>
<div class="a" style="left:744.900px;top:377.900px;width:1105.300px;height:193.200px;border:5.300px solid #fc1d11;border-radius:5px;box-sizing:border-box"></div>
</div>
</body></html>
